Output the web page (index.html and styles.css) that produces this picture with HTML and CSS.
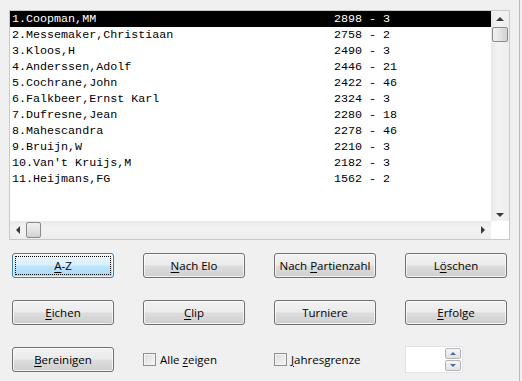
FILE: index.html
```html
<!DOCTYPE html>
<html lang="de">
<head>
    <meta charset="UTF-8">
    <title>Spielerliste</title>
    <link rel="stylesheet" href="styles.css">
</head>
<body>
    <div class="window">
        <div class="listbox">
            <div class="list-rows">
                <div class="row selected"><span class="name">1.Coopman,MM</span><span class="elo">2898 - 3</span></div>
                <div class="row"><span class="name">2.Messemaker,Christiaan</span><span class="elo">2758 - 2</span></div>
                <div class="row"><span class="name">3.Kloos,H</span><span class="elo">2490 - 3</span></div>
                <div class="row"><span class="name">4.Anderssen,Adolf</span><span class="elo">2446 - 21</span></div>
                <div class="row"><span class="name">5.Cochrane,John</span><span class="elo">2422 - 46</span></div>
                <div class="row"><span class="name">6.Falkbeer,Ernst Karl</span><span class="elo">2324 - 3</span></div>
                <div class="row"><span class="name">7.Dufresne,Jean</span><span class="elo">2280 - 18</span></div>
                <div class="row"><span class="name">8.Mahescandra</span><span class="elo">2278 - 46</span></div>
                <div class="row"><span class="name">9.Bruijn,W</span><span class="elo">2210 - 3</span></div>
                <div class="row"><span class="name">10.Van't Kruijs,M</span><span class="elo">2182 - 3</span></div>
                <div class="row"><span class="name">11.Heijmans,FG</span><span class="elo">1562 - 2</span></div>
            </div>
            <div class="vscroll">
                <span class="arrow up"></span>
                <span class="thumb vthumb"></span>
                <span class="spacer"></span>
                <span class="arrow down"></span>
            </div>
            <div class="hscroll">
                <span class="arrow left"></span>
                <span class="thumb hthumb"></span>
                <span class="spacer"></span>
                <span class="arrow right"></span>
            </div>
            <div class="corner"></div>
        </div>

        <div class="controls">
            <button class="btn focused"><span class="focus-ring"><span><u>A</u>-Z</span></span></button>
            <button class="btn"><span><u>N</u>ach Elo</span></button>
            <button class="btn"><span>Nach <u>P</u>artienzahl</span></button>
            <button class="btn"><span>L<u>ö</u>schen</span></button>

            <button class="btn"><span><u>E</u>ichen</span></button>
            <button class="btn"><span><u>C</u>lip</span></button>
            <button class="btn"><span>Turniere</span></button>
            <button class="btn"><span><u>E</u>rfolge</span></button>

            <button class="btn"><span><u>B</u>ereinigen</span></button>
            <label class="check"><span class="box"></span><span>Alle <u>z</u>eigen</span></label>
            <label class="check"><span class="box"></span><span><u>J</u>ahresgrenze</span></label>
            <div class="spin">
                <span class="spin-field"></span>
                <span class="spin-buttons">
                    <span class="spin-btn"><span class="tri tri-up"></span></span>
                    <span class="spin-btn"><span class="tri tri-down"></span></span>
                </span>
            </div>
        </div>
    </div>
</body>
</html>
```

FILE: styles.css
```css
* {
    margin: 0;
    padding: 0;
    box-sizing: border-box;
}
body {
    background-color: #f0f0f0;
    font-family: "Open Sans", "Noto Sans", Arial, sans-serif;
    font-size: 11.5px;
    color: #000;
    overflow: hidden;
}
.window {
    width: 520px;
    height: 381px;
    padding: 10px 0 0 9px;
    border-right: 1px solid #b9b9b9;
}

/* Liste */
.listbox {
    width: 501px;
    height: 230px;
    border: 1px solid #c7c9cc;
    background-color: #fff;
    display: grid;
    grid-template-columns: 1fr 18px;
    grid-template-rows: 1fr 18px;
}
.list-rows {
    overflow: hidden;
}
.row {
    display: flex;
    height: 16px;
    line-height: 16px;
    padding-left: 2px;
    font-family: "Liberation Mono", "Courier New", monospace;
    font-size: 11.7px;
    white-space: pre;
}
.row.selected {
    background-color: #000;
    color: #fff;
}
.name {
    width: 322px;
}

/* Scrollbalken */
.vscroll, .hscroll {
    display: flex;
    align-items: center;
    background: linear-gradient(to right, #e8e8e8, #f3f3f3 40%, #ededed);
}
.vscroll {
    flex-direction: column;
    padding: 6px 0 4px;
}
.hscroll {
    background: linear-gradient(to bottom, #e8e8e8, #f3f3f3 40%, #ededed);
    padding: 0 6px;
}
.spacer {
    flex: 1;
}
.arrow {
    width: 0;
    height: 0;
    border: 4px solid transparent;
}
.arrow.up {
    border-bottom-color: #3a3a3a;
    border-top-width: 0;
}
.arrow.down {
    border-top-color: #3a3a3a;
    border-bottom-width: 0;
}
.arrow.left {
    border-right-color: #3a3a3a;
    border-left-width: 0;
}
.arrow.right {
    border-left-color: #3a3a3a;
    border-right-width: 0;
}
.thumb {
    border: 1px solid #8b8b8b;
    border-radius: 2px;
}
.vthumb {
    width: 16px;
    height: 15px;
    margin-top: 6px;
    background: linear-gradient(to right, #f0f0f0, #e4e4e4 50%, #d2d2d2);
}
.hthumb {
    width: 15px;
    height: 16px;
    margin-left: 6px;
    background: linear-gradient(to bottom, #f0f0f0, #e4e4e4 50%, #d2d2d2);
}
.corner {
    background-color: #fff;
}

/* Schaltflächen */
.controls {
    display: grid;
    grid-template-columns: repeat(4, 102px);
    grid-auto-rows: 25px;
    column-gap: 29px;
    row-gap: 22px;
    margin: 13px 0 0 3px;
}
.btn {
    font-family: inherit;
    font-size: 11.5px;
    color: #000;
    border: 1px solid #707070;
    border-radius: 3px;
    background: linear-gradient(to bottom, #f2f2f2 0%, #ebebeb 48%, #dddddd 52%, #cfcfcf 100%);
    box-shadow: inset 0 0 0 1px rgba(255, 255, 255, 0.7);
    display: flex;
    align-items: center;
    justify-content: center;
}
.btn u, .check u {
    text-decoration-thickness: 1px;
    text-underline-offset: 2px;
}
.btn.focused {
    border-color: #3c7fb1;
    background: linear-gradient(to bottom, #eaf6fd 0%, #d9f0fc 48%, #bee6fd 52%, #a7d9f5 100%);
    padding: 2px;
}
.focus-ring {
    flex: 1;
    align-self: stretch;
    display: flex;
    align-items: center;
    justify-content: center;
    border: 1px dotted #000;
}
.check {
    display: flex;
    align-items: center;
    gap: 4px;
    padding-bottom: 1px;
}
.box {
    width: 13px;
    height: 13px;
    border: 1px solid #8e8f8f;
    background: linear-gradient(135deg, #dcdcdc, #f6f6f6);
    box-shadow: inset 0 0 0 1px #f4f4f4;
}
.spin {
    width: 58px;
    height: 27px;
    margin-top: -1px;
    display: flex;
    border: 1px solid #e2e3ea;
    background-color: #fff;
}
.spin-field {
    flex: 1;
}
.spin-buttons {
    width: 17px;
    display: flex;
    flex-direction: column;
    padding: 1px 1px 1px 0;
    gap: 1px;
}
.spin-btn {
    flex: 1;
    display: flex;
    align-items: center;
    justify-content: center;
    border: 1px solid #b3b3b3;
    border-radius: 2px;
    background: linear-gradient(to bottom, #f6f6f6, #e2e2e2);
}
.tri {
    width: 0;
    height: 0;
    border: 3px solid transparent;
}
.tri-up {
    border-bottom-color: #4d6aa8;
    border-top-width: 0;
}
.tri-down {
    border-top-color: #4d6aa8;
    border-bottom-width: 0;
}
```
